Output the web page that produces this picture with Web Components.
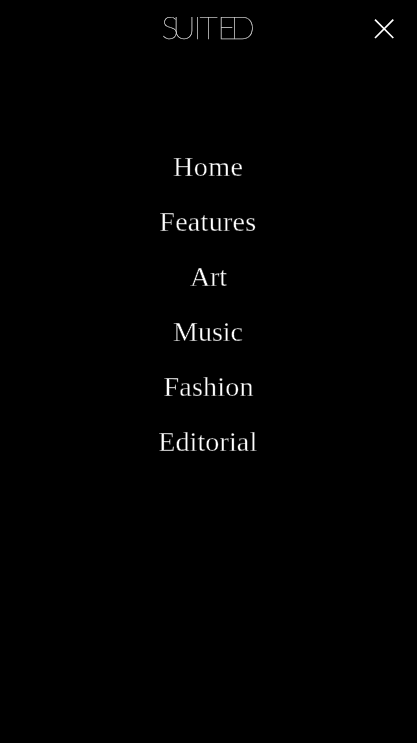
<!DOCTYPE html>
<html lang="en"><head><meta charset="utf-8"><title>SUITED</title>
<style>html,body{margin:0;height:100%;background:#000;overflow:hidden}</style></head>
<body><suited-menu></suited-menu>
<script>
class BrandLogo extends HTMLElement{
  constructor(){super();this.attachShadow({mode:'open'}).innerHTML=`<style>
  :host{display:block;width:92px;height:32px;will-change:transform}svg{display:block;overflow:visible}
  text{font:100 32px Lato,"Liberation Sans",sans-serif;fill:#ddd;stroke:#ddd;stroke-width:.25px}</style>
  <svg width="92" height="32" role="img" aria-label="SUITED"><text y="26" x="-.6 10.6 31.5 37.6 55.2 68.4">SUITED</text></svg>`}
}
class CloseButton extends HTMLElement{
  constructor(){super();this.attachShadow({mode:'open'}).innerHTML=`<style>
  :host{display:block;width:20px;height:20px}button{all:unset;display:block;cursor:pointer}svg{display:block}</style>
  <button aria-label="Close"><svg width="20" height="20" viewBox="0 0 20 20" fill="none" stroke="#fff" stroke-width="1.7"><path d="M1 .7 19.3 19M19.3 .7 1 19"/></svg></button>`}
}
class MenuItem extends HTMLElement{
  connectedCallback(){
    this.attachShadow({mode:'open'}).innerHTML=`<style>
    :host{display:flex;justify-content:center;height:55px;align-items:center}
    a{color:#fff;text-decoration:none;white-space:nowrap;font:26.5px/55px "Liberation Serif",serif;-webkit-text-stroke:.35px #000;will-change:transform}
    </style><a><slot></slot></a>`;
    const a=this.shadowRoot.querySelector('a'),n=this.textContent.length,stretch=1.06;
    const s=(this.getAttribute('measure')/stretch-a.getBoundingClientRect().width)/(n-1);
    a.style.letterSpacing=s+'px';a.style.marginRight=-s+'px';a.style.transform='scaleX('+stretch+')';
  }
}
class SuitedMenu extends HTMLElement{
  constructor(){super();this.attachShadow({mode:'open'}).innerHTML=`<style>
  :host{display:block;height:100vh;background:#000}
  header{display:grid;grid-template-columns:1fr 92px 1fr;height:58px;align-items:center;padding:0 23px 0 22px;box-sizing:border-box}
  brand-logo{grid-column:2}close-button{justify-self:end}
  nav{padding-top:82px;padding-right:1px}</style>
  <header><brand-logo></brand-logo><close-button></close-button></header>
  <nav><menu-item measure="70">Home</menu-item><menu-item measure="97">Features</menu-item><menu-item measure="37">Art</menu-item><menu-item measure="70">Music</menu-item><menu-item measure="90">Fashion</menu-item><menu-item measure="99">Editorial</menu-item></nav>`}
}
customElements.define('brand-logo',BrandLogo);
customElements.define('close-button',CloseButton);
customElements.define('menu-item',MenuItem);
customElements.define('suited-menu',SuitedMenu);
</script></body></html>
